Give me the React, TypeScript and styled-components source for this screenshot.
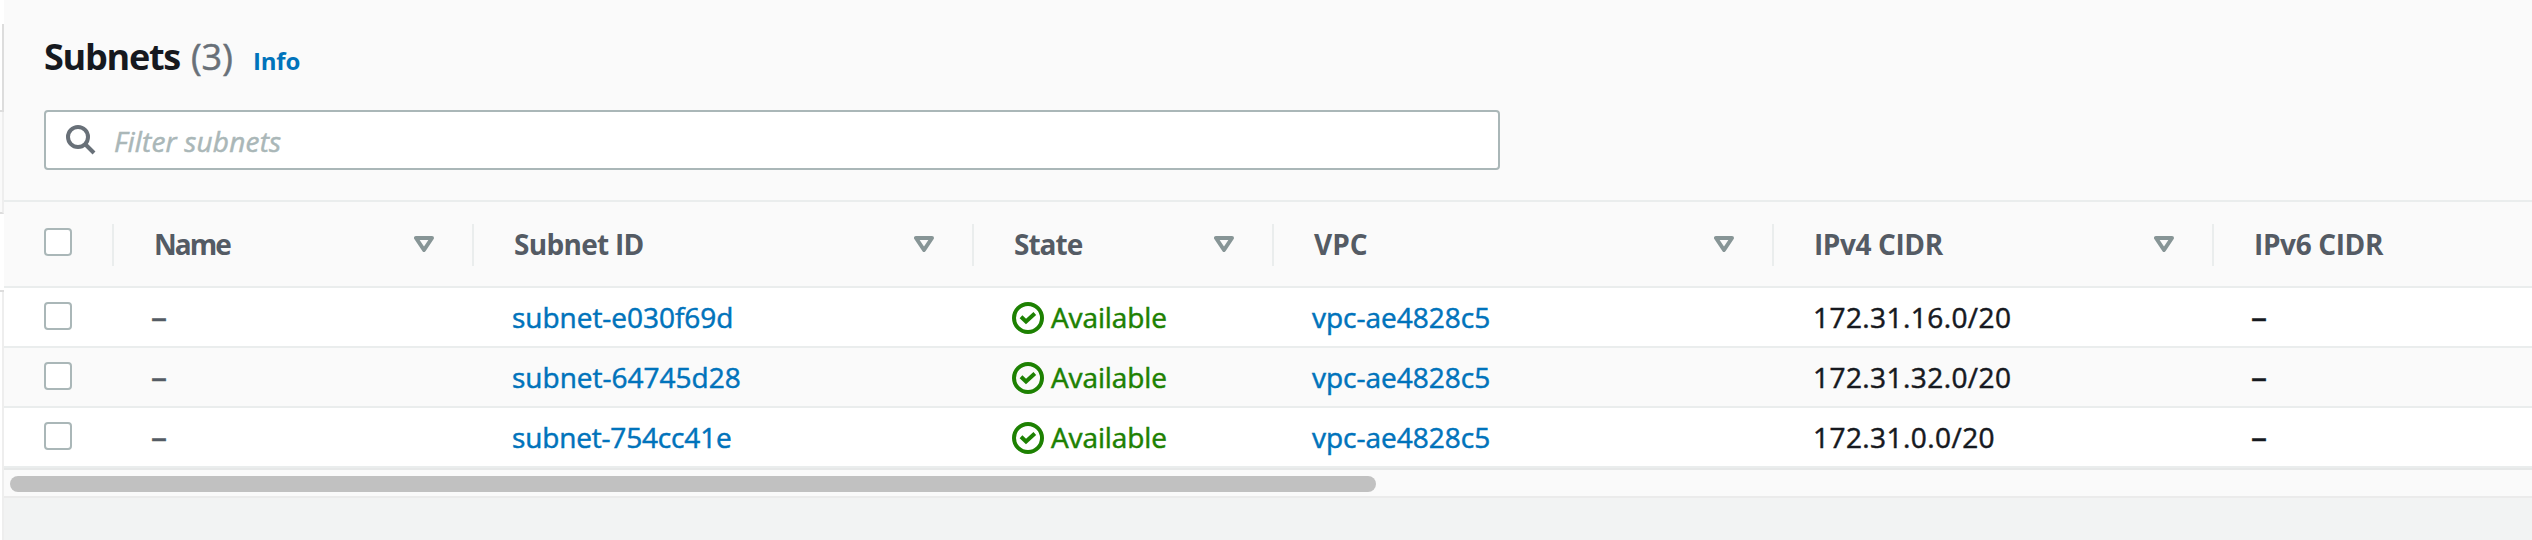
import React from 'react';
import styled, { createGlobalStyle } from 'styled-components';

const GlobalStyle = createGlobalStyle`
  * { box-sizing: border-box; }
  body { margin: 0; background: #f2f3f3; overflow: hidden; }
`;

const Page = styled.div`
  display: flex;
  width: 100%;
  height: 540px;
  overflow: hidden;
  font-family: 'Open Sans', 'Noto Sans', sans-serif;
  font-size: 28px;
  line-height: 40px;
  color: #16191f;
  white-space: nowrap;
  -webkit-text-stroke-width: 0.5px;
`;

const NavEdge = styled.div`
  display: flex;
  flex-direction: column;
  flex: 0 0 4px;
  background: #fff;
`;

const NavSegment = styled.div<{ $height?: number; $edge?: string; $bottom?: string; $fill?: string }>`
  flex: ${(p) => (p.$height ? `0 0 ${p.$height}px` : '1 1 0')};
  background: ${(p) => p.$fill ?? '#fff'};
  border-right: ${(p) => (p.$edge ? `2px solid ${p.$edge}` : 'none')};
  border-bottom: ${(p) => (p.$bottom ? `2px solid ${p.$bottom}` : 'none')};
`;

const Main = styled.main`
  flex: 1;
  min-width: 0;
  background: #f2f3f3;
`;

const PanelHeader = styled.header`
  height: 202px;
  padding: 32px 0 0 40px;
  background: #fafafa;
  border-bottom: 2px solid #eaeded;
`;

const TitleRow = styled.div`
  display: flex;
  align-items: baseline;
  height: 50px;
  margin-bottom: 28px;
`;

const Title = styled.h1`
  margin: 0;
  width: 147px;
  font-size: 36px;
  line-height: 50px;
  font-weight: 700;
  letter-spacing: -1.25px;
  -webkit-text-stroke-width: 0;
`;

const Count = styled.span`
  width: 62px;
  font-size: 36px;
  line-height: 50px;
  color: #687078;
`;

const InfoLink = styled.a`
  font-size: 24px;
  line-height: 34px;
  font-weight: 700;
  letter-spacing: -0.2px;
  color: #0073bb;
  -webkit-text-stroke-width: 0;
`;

const FilterBox = styled.div`
  display: flex;
  align-items: center;
  width: 1456px;
  height: 60px;
  padding-left: 20px;
  background: #fff;
  border: 2px solid #aab7b8;
  border-radius: 4px;
`;

const Placeholder = styled.span`
  margin: 2px 0 0 18px;
  font-style: italic;
  letter-spacing: 0.18px;
  color: #aab7b8;
`;

const TableRow = styled.div<{ $striped?: boolean }>`
  display: grid;
  grid-template-columns: 110px 360px 500px 300px 500px 440px 1fr;
  height: 60px;
  background: ${(p) => (p.$striped ? '#fafafa' : '#fff')};
  border-bottom: 2px solid #eaeded;
`;

const HeadRow = styled(TableRow)`
  height: 86px;
  padding-top: 22px;
  background: #fafafa;
`;

const HeadCell = styled.div<{ $last?: boolean }>`
  display: flex;
  justify-content: space-between;
  height: 42px;
  padding: 0 38px 0 40px;
  border-right: ${(p) => (p.$last ? 'none' : '2px solid #eaeded')};
`;

const HeadLabel = styled.span<{ $spacing: number }>`
  font-weight: 700;
  letter-spacing: ${(p) => p.$spacing}px;
  color: #545b64;
  -webkit-text-stroke-width: 0;
`;

const SortIcon = styled.svg`
  flex: none;
  width: 20px;
  height: 16px;
  margin-top: 12px;
`;

const Cell = styled.div<{ $spacing?: number }>`
  display: flex;
  padding: 9px 0 0 38px;
  letter-spacing: ${(p) => p.$spacing ?? 0}px;
`;

const CidrCell = styled(Cell)`
  padding-left: 39px;
`;

const Dash = styled.span<{ $muted?: boolean }>`
  margin-left: -1px;
  font-size: 32px;
  color: ${(p) => (p.$muted ? '#545b64' : '#16191f')};
`;

const Link = styled.a<{ $spacing?: number }>`
  letter-spacing: ${(p) => p.$spacing ?? 0}px;
  color: #0073bb;
`;

const Status = styled.span`
  display: flex;
  gap: 7px;
  letter-spacing: -0.12px;
  color: #1d8102;
`;

const StatusIcon = styled.svg`
  width: 32px;
  height: 32px;
  margin-top: 5px;
`;

const Checkbox = styled.span<{ $top: number }>`
  width: 28px;
  height: 28px;
  margin: ${(p) => p.$top}px 0 0 40px;
  background: #fff;
  border: 2px solid #aab7b8;
  border-radius: 4px;
`;

const CheckHead = styled.div`
  display: flex;
  height: 42px;
  border-right: 2px solid #eaeded;
`;

const ScrollTrack = styled.div`
  height: 30px;
  padding: 8px 0 0 6px;
  background: #fafafa;
  border-top: 2px solid #e6e8e8;
  border-bottom: 2px solid #ebebeb;
`;

const ScrollThumb = styled.div`
  width: 1366px;
  height: 16px;
  margin-top: -2px;
  background: #c1c1c1;
  border-radius: 8px;
`;

const columns = [
  { label: 'Name', spacing: -2 },
  { label: 'Subnet ID', spacing: -0.7 },
  { label: 'State', spacing: -1 },
  { label: 'VPC', spacing: 0 },
  { label: 'IPv4 CIDR', spacing: -0.4 },
  { label: 'IPv6 CIDR', spacing: -0.37 },
];

const subnets = [
  { id: 'subnet-e030f69d', idSpacing: -0.03, vpc: 'vpc-ae4828c5', cidr: '172.31.16.0/20' },
  { id: 'subnet-64745d28', idSpacing: 0, vpc: 'vpc-ae4828c5', cidr: '172.31.32.0/20' },
  { id: 'subnet-754cc41e', idSpacing: -0.17, vpc: 'vpc-ae4828c5', cidr: '172.31.0.0/20' },
];

export default function App() {
  return (
    <Page>
      <GlobalStyle />
      <NavEdge>
        <NavSegment $height={24} />
        <NavSegment $height={88} $edge="#dddddd" $bottom="#dddddd" />
        <NavSegment $height={102} $edge="#eeeeee" $bottom="#dddddd" $fill="#fafafa" />
        <NavSegment $height={78} $bottom="#dddddd" />
        <NavSegment $edge="#eeeeee" />
      </NavEdge>
      <Main>
        <PanelHeader>
          <TitleRow>
            <Title>Subnets</Title>
            <Count>(3)</Count>
            <InfoLink>Info</InfoLink>
          </TitleRow>
          <FilterBox>
            <svg width="30" height="30" viewBox="0 0 30 30" fill="none" stroke="#687078" strokeWidth="4">
              <circle cx="12" cy="12" r="10" />
              <path d="M19 19l9 9" />
            </svg>
            <Placeholder>Filter subnets</Placeholder>
          </FilterBox>
        </PanelHeader>
        <HeadRow>
          <CheckHead>
            <Checkbox $top={4} />
          </CheckHead>
          {columns.map((c, i) => (
            <HeadCell key={c.label} $last={i === columns.length - 1}>
              <HeadLabel $spacing={c.spacing}>{c.label}</HeadLabel>
              {i < columns.length - 1 && (
                <SortIcon viewBox="0 0 20 16">
                  <path d="M2 2H18L10 14Z" fill="none" stroke="#879596" strokeWidth="4" strokeLinejoin="round" />
                </SortIcon>
              )}
            </HeadCell>
          ))}
        </HeadRow>
        {subnets.map((s, i) => (
          <TableRow key={s.id} $striped={i % 2 === 1}>
            <Checkbox $top={14} />
            <Cell>
              <Dash $muted>–</Dash>
            </Cell>
            <Cell>
              <Link $spacing={s.idSpacing}>{s.id}</Link>
            </Cell>
            <Cell>
              <Status>
                <StatusIcon viewBox="0 0 32 32" fill="none" stroke="#1d8102" strokeWidth="4">
                  <circle cx="16" cy="16" r="14" />
                  <path d="M9 14.8L14 19.5L22.8 11.5" />
                </StatusIcon>
                Available
              </Status>
            </Cell>
            <Cell>
              <Link>{s.vpc}</Link>
            </Cell>
            <CidrCell $spacing={0.43}>{s.cidr}</CidrCell>
            <Cell>
              <Dash>–</Dash>
            </Cell>
          </TableRow>
        ))}
        <ScrollTrack>
          <ScrollThumb />
        </ScrollTrack>
      </Main>
    </Page>
  );
}
